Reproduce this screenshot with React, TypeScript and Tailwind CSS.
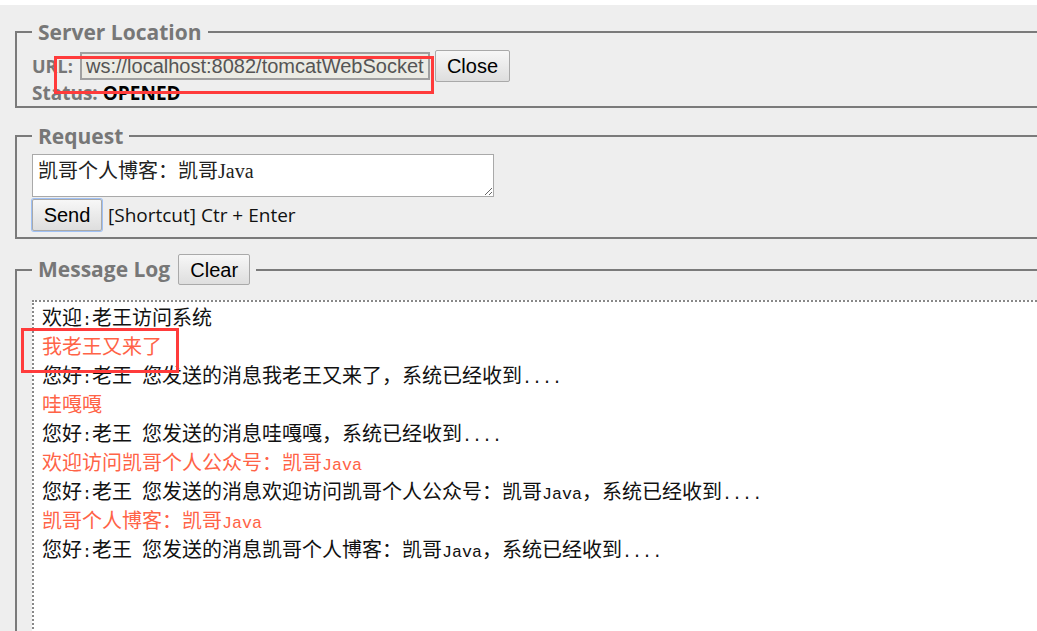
import { useState } from "react";

type Line = { text: string; mine?: boolean };

const initialLog: Line[] = [
	{ text: "欢迎:老王访问系统" },
	{ text: "我老王又来了", mine: true },
	{ text: "您好:老王 您发送的消息我老王又来了，系统已经收到...." },
	{ text: "哇嘎嘎", mine: true },
	{ text: "您好:老王 您发送的消息哇嘎嘎，系统已经收到...." },
	{ text: "欢迎访问凯哥个人公众号：凯哥Java", mine: true },
	{ text: "您好:老王 您发送的消息欢迎访问凯哥个人公众号：凯哥Java，系统已经收到...." },
	{ text: "凯哥个人博客：凯哥Java", mine: true },
	{ text: "您好:老王 您发送的消息凯哥个人博客：凯哥Java，系统已经收到...." },
];

const legendCls =
	"px-[6px] text-[21px] leading-[26px] font-bold text-[#777] font-['Open_Sans',sans-serif]";
const buttonCls =
	"rounded-[2px] border border-[#a9a9a9] bg-gradient-to-b from-[#f7f7f7] to-[#dedede] text-[20px] text-black font-['Liberation_Sans',Arial,sans-serif]";

// half-width runs get a mono face so they take half a CJK cell, like the old SimSun log
function LogText({ text }: { text: string }) {
	const parts = text.split(/([\x20-\x7e]+)/).filter(Boolean);
	return (
		<>
			{parts.map((p, i) =>
				/^[\x20-\x7e]+$/.test(p) ? (
					<span key={i} className="whitespace-pre text-[16.7px] leading-none font-['Liberation_Mono',monospace]">
						{p}
					</span>
				) : (
					<span key={i}>{p}</span>
				),
			)}
		</>
	);
}

export default function App() {
	const [log, setLog] = useState<Line[]>(initialLog);
	const [message, setMessage] = useState("凯哥个人博客：凯哥Java");

	return (
		<div className="relative h-[631px] overflow-hidden border-t-[5px] border-white bg-[#eeeeee]">
			<div className="-mr-[40px] ml-[15px] flex flex-col gap-[15px] pt-[14px]">
				<fieldset className="border-2 border-[#7a7a7a] px-[15px] pb-[2px]">
					<legend className={legendCls}>Server Location</legend>
					<div className="mt-[5px] flex items-center">
						<span className="w-[48px] text-[18px] font-bold text-[#777] font-['Open_Sans',sans-serif]">
							URL:
						</span>
						<input
							readOnly
							value="ws://localhost:8082/tomcatWebSocket"
							className="h-[28px] w-[350px] border-2 border-[#a0a0a0] bg-[#ebebe4] px-[4px] py-0 text-[20px] leading-[22px] text-[#555] font-['Liberation_Sans',Arial,sans-serif] outline-none"
						/>
						<button className={`${buttonCls} ml-[5px] h-[32px] w-[75px]`}>Close</button>
					</div>
					<div className="text-[19px] leading-[22px] font-bold font-['Open_Sans',sans-serif]">
						<span className="text-[#777]">Status: </span>
						<span className="text-black">OPENED</span>
					</div>
				</fieldset>

				<fieldset className="border-2 border-[#7a7a7a] px-[15px] pb-[6px]">
					<legend className={legendCls}>Request</legend>
					<textarea
						value={message}
						onChange={(e) => setMessage(e.target.value)}
						className="mt-[5px] block h-[43px] w-[462px] resize border border-[#a9a9a9] bg-white px-[5px] pt-[3px] pb-0 text-[20px] leading-[26px] text-[#222] font-['Liberation_Serif','Noto_Sans_CJK_SC',serif] outline-none"
					/>
					<div className="mt-[2px] flex items-center">
						<button
							onClick={() => setLog([...log, { text: message, mine: true }])}
							className={`${buttonCls} h-[32px] w-[70px] border-[#6d9ae8] ring-1 ring-[#9ec0f5]`}
						>
							Send
						</button>
						<span className="ml-[6px] text-[19px] text-[#111] font-['Open_Sans',sans-serif]">
							[Shortcut] Ctr + Enter
						</span>
					</div>
				</fieldset>

				<fieldset className="border-2 border-[#7a7a7a] px-[15px]">
					<legend className="flex items-center px-[6px]">
						<span className="text-[21px] font-bold text-[#777] font-['Open_Sans',sans-serif]">
							Message Log
						</span>
						<button onClick={() => setLog([])} className={`${buttonCls} ml-[8px] h-[31px] w-[72px]`}>
							Clear
						</button>
					</legend>
					<div className="mt-[14px] h-[400px] border-2 border-dotted border-[#888] bg-white px-[8px] pt-[2px] text-[20px] leading-[29px] font-['Liberation_Serif','Noto_Sans_CJK_SC',serif]">
						{log.map((line, i) => (
							<div key={i} className={`h-[29px] ${line.mine ? "text-[#ff6347]" : "text-[#111]"}`}>
								<LogText text={line.text} />
							</div>
						))}
					</div>
				</fieldset>
			</div>

			<div className="pointer-events-none absolute left-[54px] top-[51px] h-[38px] w-[380px] border-[3px] border-[#ff3b3b]" />
			<div className="pointer-events-none absolute left-[21px] top-[323px] h-[45px] w-[158px] border-[3px] border-[#ff3b3b]" />
		</div>
	);
}
